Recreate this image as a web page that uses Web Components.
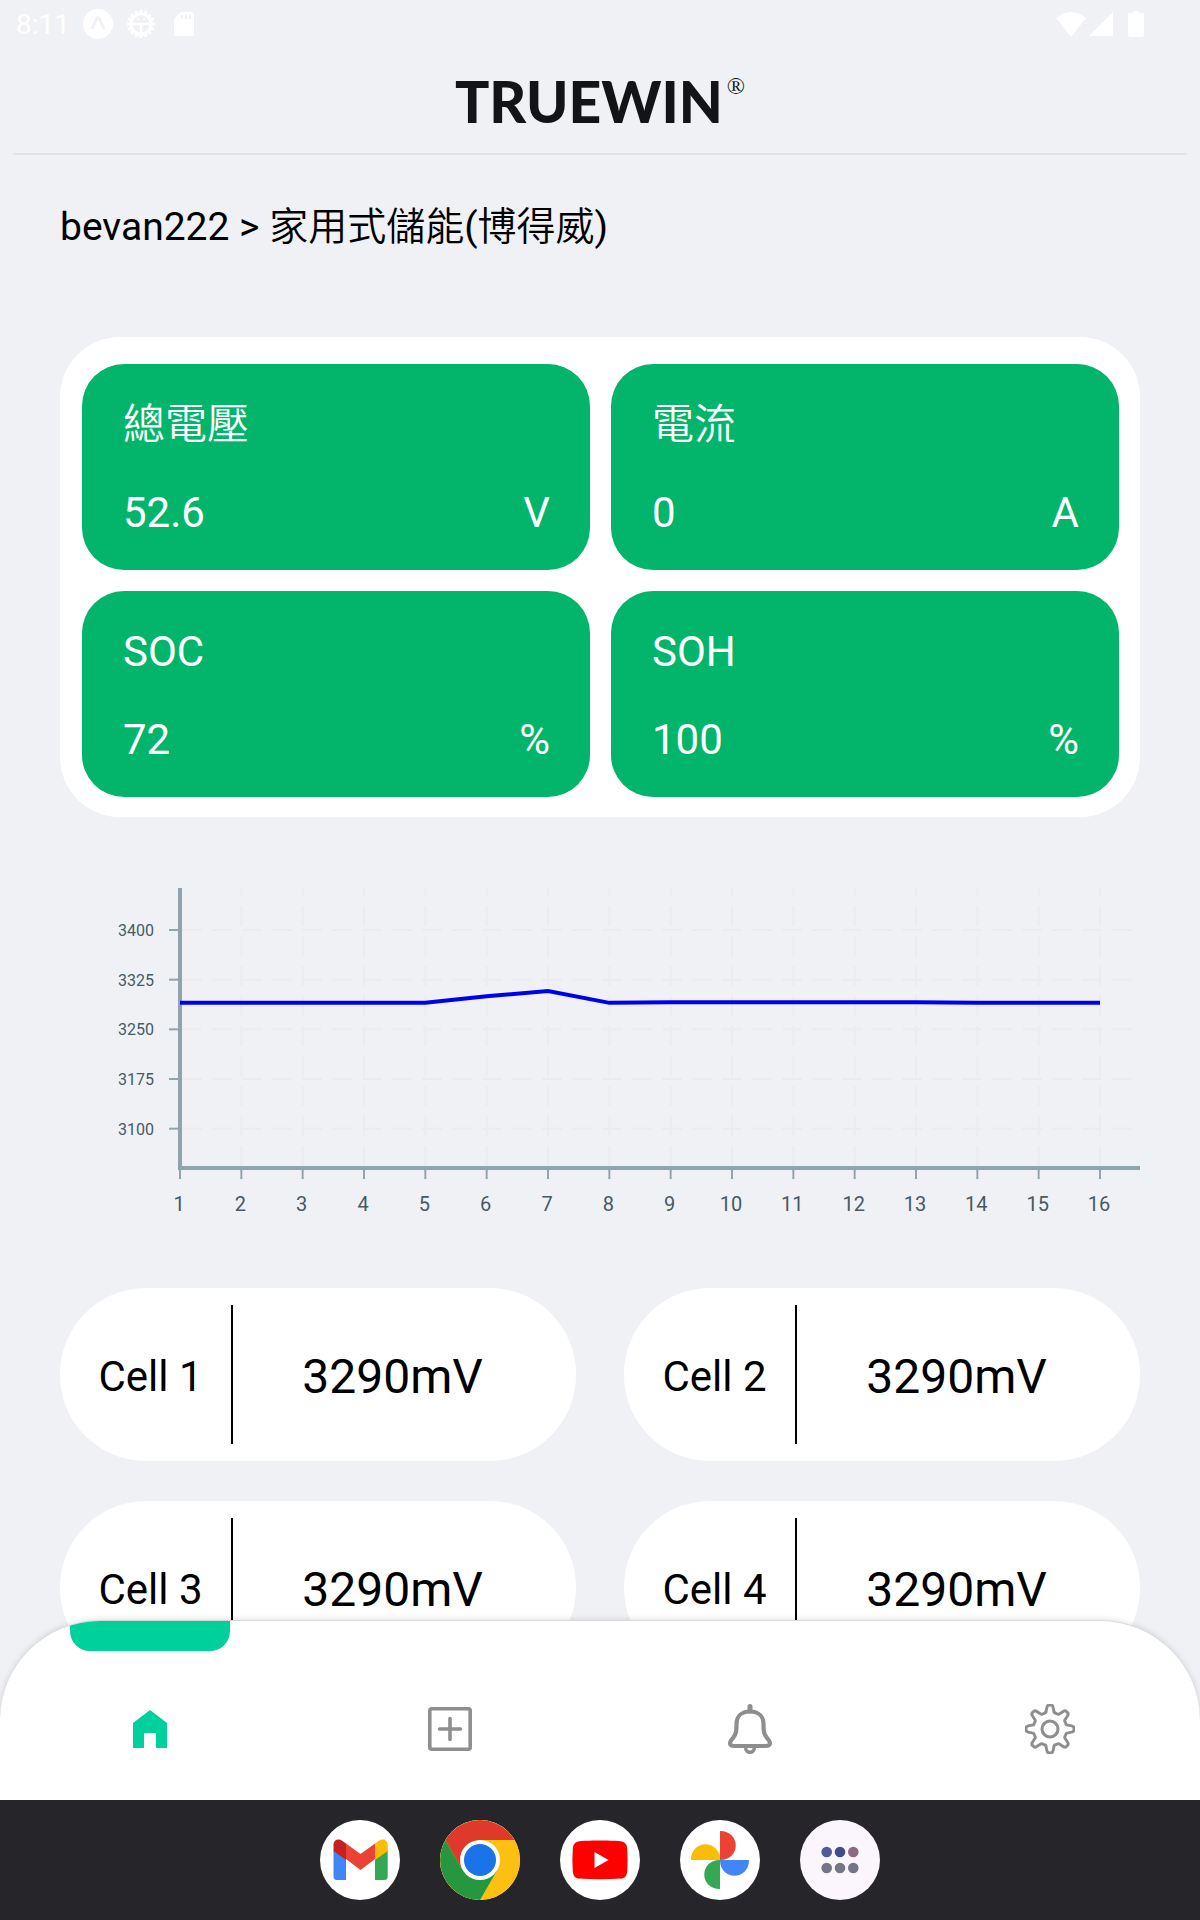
<!DOCTYPE html>
<html lang="zh-Hant">
<head>
<meta charset="utf-8">
<meta name="viewport" content="width=device-width, initial-scale=1">
<title>TRUEWIN</title>
<style>
  body { margin: 0; background: #f0f1f5; color: #000; font-family: Roboto, "Noto Sans CJK TC", sans-serif; }
  .han { font-weight: 350; }
</style>
</head>
<body>
<energy-app>
  <status-bar slot="status" time="8:11"></status-bar>
  <brand-header slot="header">TRUEWIN</brand-header>
  <bread-crumb>bevan222 &gt; <span class="han">家用式儲能</span>(<span class="han">博得威</span>)</bread-crumb>
  <stat-grid>
    <stat-tile value="52.6" unit="V"><span class="han">總電壓</span></stat-tile>
    <stat-tile value="0" unit="A"><span class="han">電流</span></stat-tile>
    <stat-tile value="72" unit="%">SOC</stat-tile>
    <stat-tile value="100" unit="%">SOH</stat-tile>
  </stat-grid>
  <cell-chart values="3290,3290,3290,3290,3290,3300,3308,3290,3291,3291,3291,3291,3291,3290,3290,3290"></cell-chart>
  <cell-grid>
    <cell-pill value="3290mV">Cell 1</cell-pill>
    <cell-pill value="3290mV">Cell 2</cell-pill>
    <cell-pill value="3290mV">Cell 3</cell-pill>
    <cell-pill value="3290mV">Cell 4</cell-pill>
  </cell-grid>
  <tab-bar slot="tabs"></tab-bar>
  <app-dock slot="dock"></app-dock>
</energy-app>

<script>
class Base extends HTMLElement {
  connectedCallback() {
    if (!this.shadowRoot) this.attachShadow({ mode: 'open' }).innerHTML = this.view();
  }
}
const define = (name, view) => customElements.define(name, class extends Base { view() { return view(this); } });

define('energy-app', () => `
  <style>
    :host { display: flex; flex-direction: column; height: 100vh; overflow: hidden; }
    main { flex: 1; min-height: 0; overflow: auto; scrollbar-width: none; padding: 0 5%; }
    ::slotted([slot=tabs]) { margin-top: -100px; }
  </style>
  <slot name="status"></slot>
  <slot name="header"></slot>
  <main><slot></slot></main>
  <slot name="tabs"></slot>
  <slot name="dock"></slot>`);

define('status-bar', el => {
  let cog = '';
  for (let i = 0; i < 16; i++) cog += `<path d="M15 1v4" transform="rotate(${i * 22.5} 15 15)"/>`;
  return `
  <style>
    :host { display: flex; justify-content: space-between; align-items: center; height: 48px; padding: 0 55px 0 16px; color: #fff; font-size: 28px; line-height: 32px; }
    div { display: flex; align-items: center; gap: 13px; }
    span { padding-top: 2px; }
    .signals { gap: 2px; }
    svg { display: block; fill: #fff; }
  </style>
  <div>
    <span>${el.getAttribute('time')}</span>
    <svg width="30" height="30" viewBox="0 0 30 30"><circle cx="15" cy="15" r="15"/><path d="M9 20l5-11h2l5 11" fill="none" stroke="#f0f1f5" stroke-width="3"/></svg>
    <svg width="30" height="30" viewBox="0 0 30 30"><g stroke="#fff" stroke-width="3">${cog}</g><path d="M5 15h20M15 15v10" stroke="#fff" stroke-width="2.5"/><circle cx="15" cy="15" r="10" fill="none" stroke="#fff" stroke-width="3"/><path d="M11 10h2M17 10h2" stroke="#fff" stroke-width="1.5"/></svg>
    <svg width="30" height="30" viewBox="-2 0 30 30"><path d="M10 3h10q3 0 3 3v19q0 2-2 2H5q-2 0-2-2V10z"/><path d="M11 6v4M15 6v4M19 6v4" stroke="#f0f1f5" stroke-width="2"/></svg>
  </div>
  <div class="signals">
    <svg width="32" height="30" viewBox="0 0 32 30"><path d="M16 28L1 9Q8 3 16 3t15 6z"/></svg>
    <svg width="24" height="30" viewBox="0 0 24 30"><path d="M24 3v24H0z"/></svg>
    <svg width="30" height="30" viewBox="0 0 30 30"><path d="M18 4V2h6v2h3q2 0 2 2v20q0 2-2 2H15q-2 0-2-2V6q0-2 2-2z"/></svg>
  </div>`;
});

define('brand-header', () => `
  <style>
    :host { display: flex; justify-content: center; align-items: flex-start; height: 105px; box-sizing: content-box; margin: 0 13px; border-bottom: 2px solid #e2e3e7; color: #131415; }
    h1 { margin: 0; padding-top: 21px; display: flex; align-items: flex-start; gap: 4px; font: 900 57px/64px Lato, sans-serif; }
    sup { font: 24px/24px "Liberation Serif", serif; padding-top: 5px; }
  </style>
  <h1><span><slot></slot></span><sup>®</sup></h1>`);

define('bread-crumb', () => `
  <style>:host { display: block; height: 48px; padding: 48px 0 86px; font-size: 39px; line-height: 48px; }</style>
  <slot></slot>`);

define('stat-grid', () => `
  <style>
    :host { display: grid; grid-template-columns: 1fr 1fr; gap: 21px; padding: 27px 21px 20px 22px; border-radius: 60px; background: #fff; }
  </style>
  <slot></slot>`);

define('stat-tile', el => `
  <style>
    :host { display: flex; flex-direction: column; gap: 40px; padding: 37px 40px 33px 41px; border-radius: 42px; background: #02b56a; color: #fff; font-size: 42px; line-height: 48px; }
    .row { display: flex; justify-content: space-between; }
    .name { height: 48px; }
  </style>
  <div class="name"><slot></slot></div>
  <div class="row"><span>${el.getAttribute('value')}</span><span>${el.getAttribute('unit')}</span></div>`);

define('cell-chart', el => {
  const values = el.getAttribute('values').split(',').map(Number);
  const step = 920 / (values.length - 1);
  const x = i => 120 + step * i;
  const y = v => 70 + (3400 - v) * 49.67 / 75;
  const levels = [3400, 3325, 3250, 3175, 3100];
  return `
  <style>
    :host { display: block; margin: 43px 0 48px; }
    svg { display: block; width: 100%; overflow: visible; }
    text { fill: #455a64; }
    .y text { font-size: 16px; text-anchor: end; }
    .x text { font-size: 20px; text-anchor: middle; }
    .grid { stroke: #eaecef; stroke-width: 2; stroke-dasharray: 20 10; }
    .tick { stroke: #90a4ae; stroke-width: 2; }
    .axis { fill: none; stroke: #90a4ae; stroke-width: 4; }
    .line { fill: none; stroke: #0000ec; stroke-width: 4; }
  </style>
  <svg viewBox="0 0 1080 380" role="img" aria-label="Cell voltage">
    <g class="grid">
      ${levels.map(v => `<path d="M122 ${y(v)}H1078"/>`).join('')}
      ${values.map((v, i) => i ? `<path d="M${x(i)} 306V28"/>` : '').join('')}
    </g>
    <path class="axis" d="M120 28V308H1080"/>
    <g class="tick">
      ${levels.map(v => `<path d="M109 ${y(v)}H120"/>`).join('')}
      ${values.map((v, i) => `<path d="M${x(i)} 308V319"/>`).join('')}
    </g>
    <path class="line" d="M${values.map((v, i) => x(i) + ' ' + y(v)).join('L')}"/>
    <g class="y">${levels.map(v => `<text x="94" y="${y(v) + 6}">${v}</text>`).join('')}</g>
    <g class="x">${values.map((v, i) => `<text x="${x(i) - 1}" y="351">${i + 1}</text>`).join('')}</g>
  </svg>`;
});

define('cell-grid', () => `
  <style>:host { display: grid; grid-template-columns: 1fr 1fr; gap: 40px 48px; }</style>
  <slot></slot>`);

define('cell-pill', el => `
  <style>
    :host { display: flex; align-items: center; box-sizing: border-box; padding: 17px 24px 17px 10px; border-radius: 86px; background: #fff; }
    .name { flex: 0 0 161px; padding-top: 5px; text-align: center; font-size: 42px; line-height: 134px; border-right: 2px solid #000; }
    .value { flex: 1; padding-top: 5px; text-align: center; font-size: 48px; line-height: 56px; }
  </style>
  <span class="name"><slot></slot></span>
  <span class="value">${el.getAttribute('value')}</span>`);

function gearPath() {
  const p = (r, deg) => {
    const a = (deg - 90) * Math.PI / 180;
    return (25 + r * Math.cos(a)).toFixed(2) + ' ' + (25 + r * Math.sin(a)).toFixed(2);
  };
  let d = '';
  for (let i = 0; i < 8; i++) {
    const t = i * 45;
    d += `${i ? 'L' : 'M'}${p(22, t - 8)}Q${p(24.5, t - 6)} ${p(24, t)}Q${p(24.5, t + 6)} ${p(22, t + 8)}L${p(18.5, t + 12)}Q${p(16.2, t + 14)} ${p(16.8, t + 22.5)}Q${p(16.2, t + 31)} ${p(18.5, t + 33)}`;
  }
  return d + 'z';
}

define('tab-bar', () => `
  <style>
    :host { display: block; position: relative; filter: drop-shadow(0 0 3px rgba(0, 0, 0, .14)); }
    nav { display: flex; height: 179px; border-top: 1px solid #d8d8d8; border-radius: 100px 100px 0 0; background: #fff; overflow: hidden; }
    a { flex: 1; display: grid; grid-template-rows: 30px 1fr; justify-items: center; color: #8e8e8e; }
    a::before { content: ""; width: 160px; height: 30px; border-radius: 0 0 20px 20px; }
    a.on { color: #00d09c; }
    a.on::before { background: #00d09c; }
    svg { display: block; margin-top: 53px; fill: none; stroke: currentColor; }
  </style>
  <nav>
    <a class="on" href="#home" aria-label="Home"><svg width="50" height="50" viewBox="0 0 50 50"><path d="M25 6L42 19V44H31V29H19V44H8V19z" fill="currentColor" stroke="none"/></svg></a>
    <a href="#add" aria-label="Add"><svg width="50" height="50" viewBox="0 0 50 50" stroke-linecap="round"><rect x="4.800" y="4.800" width="40.400" height="40.400" rx="2" stroke-width="3.600"/><path d="M25 14.500V35.500M14.500 25H35.500" stroke-width="3.600"/></svg></a>
    <a href="#alerts" aria-label="Alerts"><svg width="50" height="50" viewBox="0 0 50 50" stroke-linecap="round" stroke-linejoin="round"><path d="M25 2.500V7" stroke-width="5"/><path d="M25 7.500C16 7.500 11.500 13 11.500 20C11.500 28 11 30 8 34L6 36.500C4 40 5.500 42 9 42H41C44.500 42 46 40 44 36.500L42 34C39 30 38.500 28 38.500 20C38.500 13 34 7.500 25 7.500z" stroke-width="4.200"/><path d="M20.500 43C20.500 50 29.500 50 29.500 43" stroke-width="3.500"/></svg></a>
    <a href="#settings" aria-label="Settings"><svg width="50" height="50" viewBox="0 0 50 50" stroke-linejoin="round"><path d="${gearPath()}" stroke-width="2.900"/><circle cx="25" cy="25" r="8" stroke-width="3.100"/></svg></a>
  </nav>`);

define('app-dock', () => `
  <style>
    :host { display: flex; justify-content: center; align-items: center; gap: 40px; height: 120px; background: #25252a; position: relative; }
    button { width: 80px; height: 80px; padding: 0; border: 0; border-radius: 50%; overflow: hidden; background: #fff; }
    button.all { background: #fbf6fe; }
    svg { display: block; width: 100%; }
  </style>
  <button aria-label="Gmail"><svg viewBox="0 0 80 80">
    <path fill="#4285f4" d="M13.500 30L26 39V60H17a3.500 3.500 0 0 1-3.500-3.500z"/>
    <path fill="#34a853" d="M55 39L67.700 30V56.500a3.500 3.500 0 0 1-3.500 3.500H55z"/>
    <path fill="#ea4335" d="M26 23.500L40.500 34L55 23.500V39L40.500 50L26 39z"/>
    <path fill="#c5221f" d="M13.500 31V25C13.500 20 18.500 18 22.500 21L26 23.500V40z"/>
    <path fill="#fbbc04" d="M67.700 31V25C67.700 20 62.500 18 58.500 21L55 23.500V40z"/></svg></button>
  <button aria-label="Chrome"><svg viewBox="0 0 80 80">
    <rect width="80" height="80" fill="#fcc013"/>
    <path fill="#26963f" d="M5.400 20A40 40 0 0 0 40 80L57.300 50H22.700z"/>
    <path fill="#df392c" d="M5.400 20A40 40 0 0 1 74.600 20H40L22.700 50z"/>
    <circle cx="40" cy="40" r="20" fill="#fff"/><circle cx="40" cy="40" r="16" fill="#1a73e8"/></svg></button>
  <button aria-label="YouTube"><svg viewBox="0 0 80 80">
    <path fill="#f00" d="M40 20.500C50 20.500 58 20.800 62 21.500Q66.500 22.500 67.200 28Q68 40 67.200 52Q66.500 57.500 62 58.500Q40 60 18 58.500Q13.500 57.500 12.800 52Q12 40 12.800 28Q13.500 22.500 18 21.500C22 20.800 30 20.500 40 20.500z"/>
    <path fill="#fff" d="M34.500 32L48.500 40L34.500 48z"/></svg></button>
  <button aria-label="Photos"><svg viewBox="0 0 80 80">
    <path fill="#ea4335" d="M40 11C61 11 61 40 40 40z"/>
    <path fill="#4285f4" d="M69 40C69 61 40 61 40 40z"/>
    <path fill="#34a853" d="M40 69C19 69 19 40 40 40z"/>
    <path fill="#fbbc04" d="M11 40C11 19 40 19 40 40z"/></svg></button>
  <button class="all" aria-label="All apps"><svg viewBox="0 0 80 80">
    <circle cx="26.700" cy="32" r="5.300" fill="#505b9a"/><circle cx="40" cy="32" r="5.300" fill="#424c8c"/><circle cx="53.300" cy="32" r="5.300" fill="#8c6a83"/>
    <g fill="#747589"><circle cx="26.700" cy="48" r="5.300"/><circle cx="40" cy="48" r="5.300"/><circle cx="53.300" cy="48" r="5.300"/></g></svg></button>`);
</script>
</body>
</html>
